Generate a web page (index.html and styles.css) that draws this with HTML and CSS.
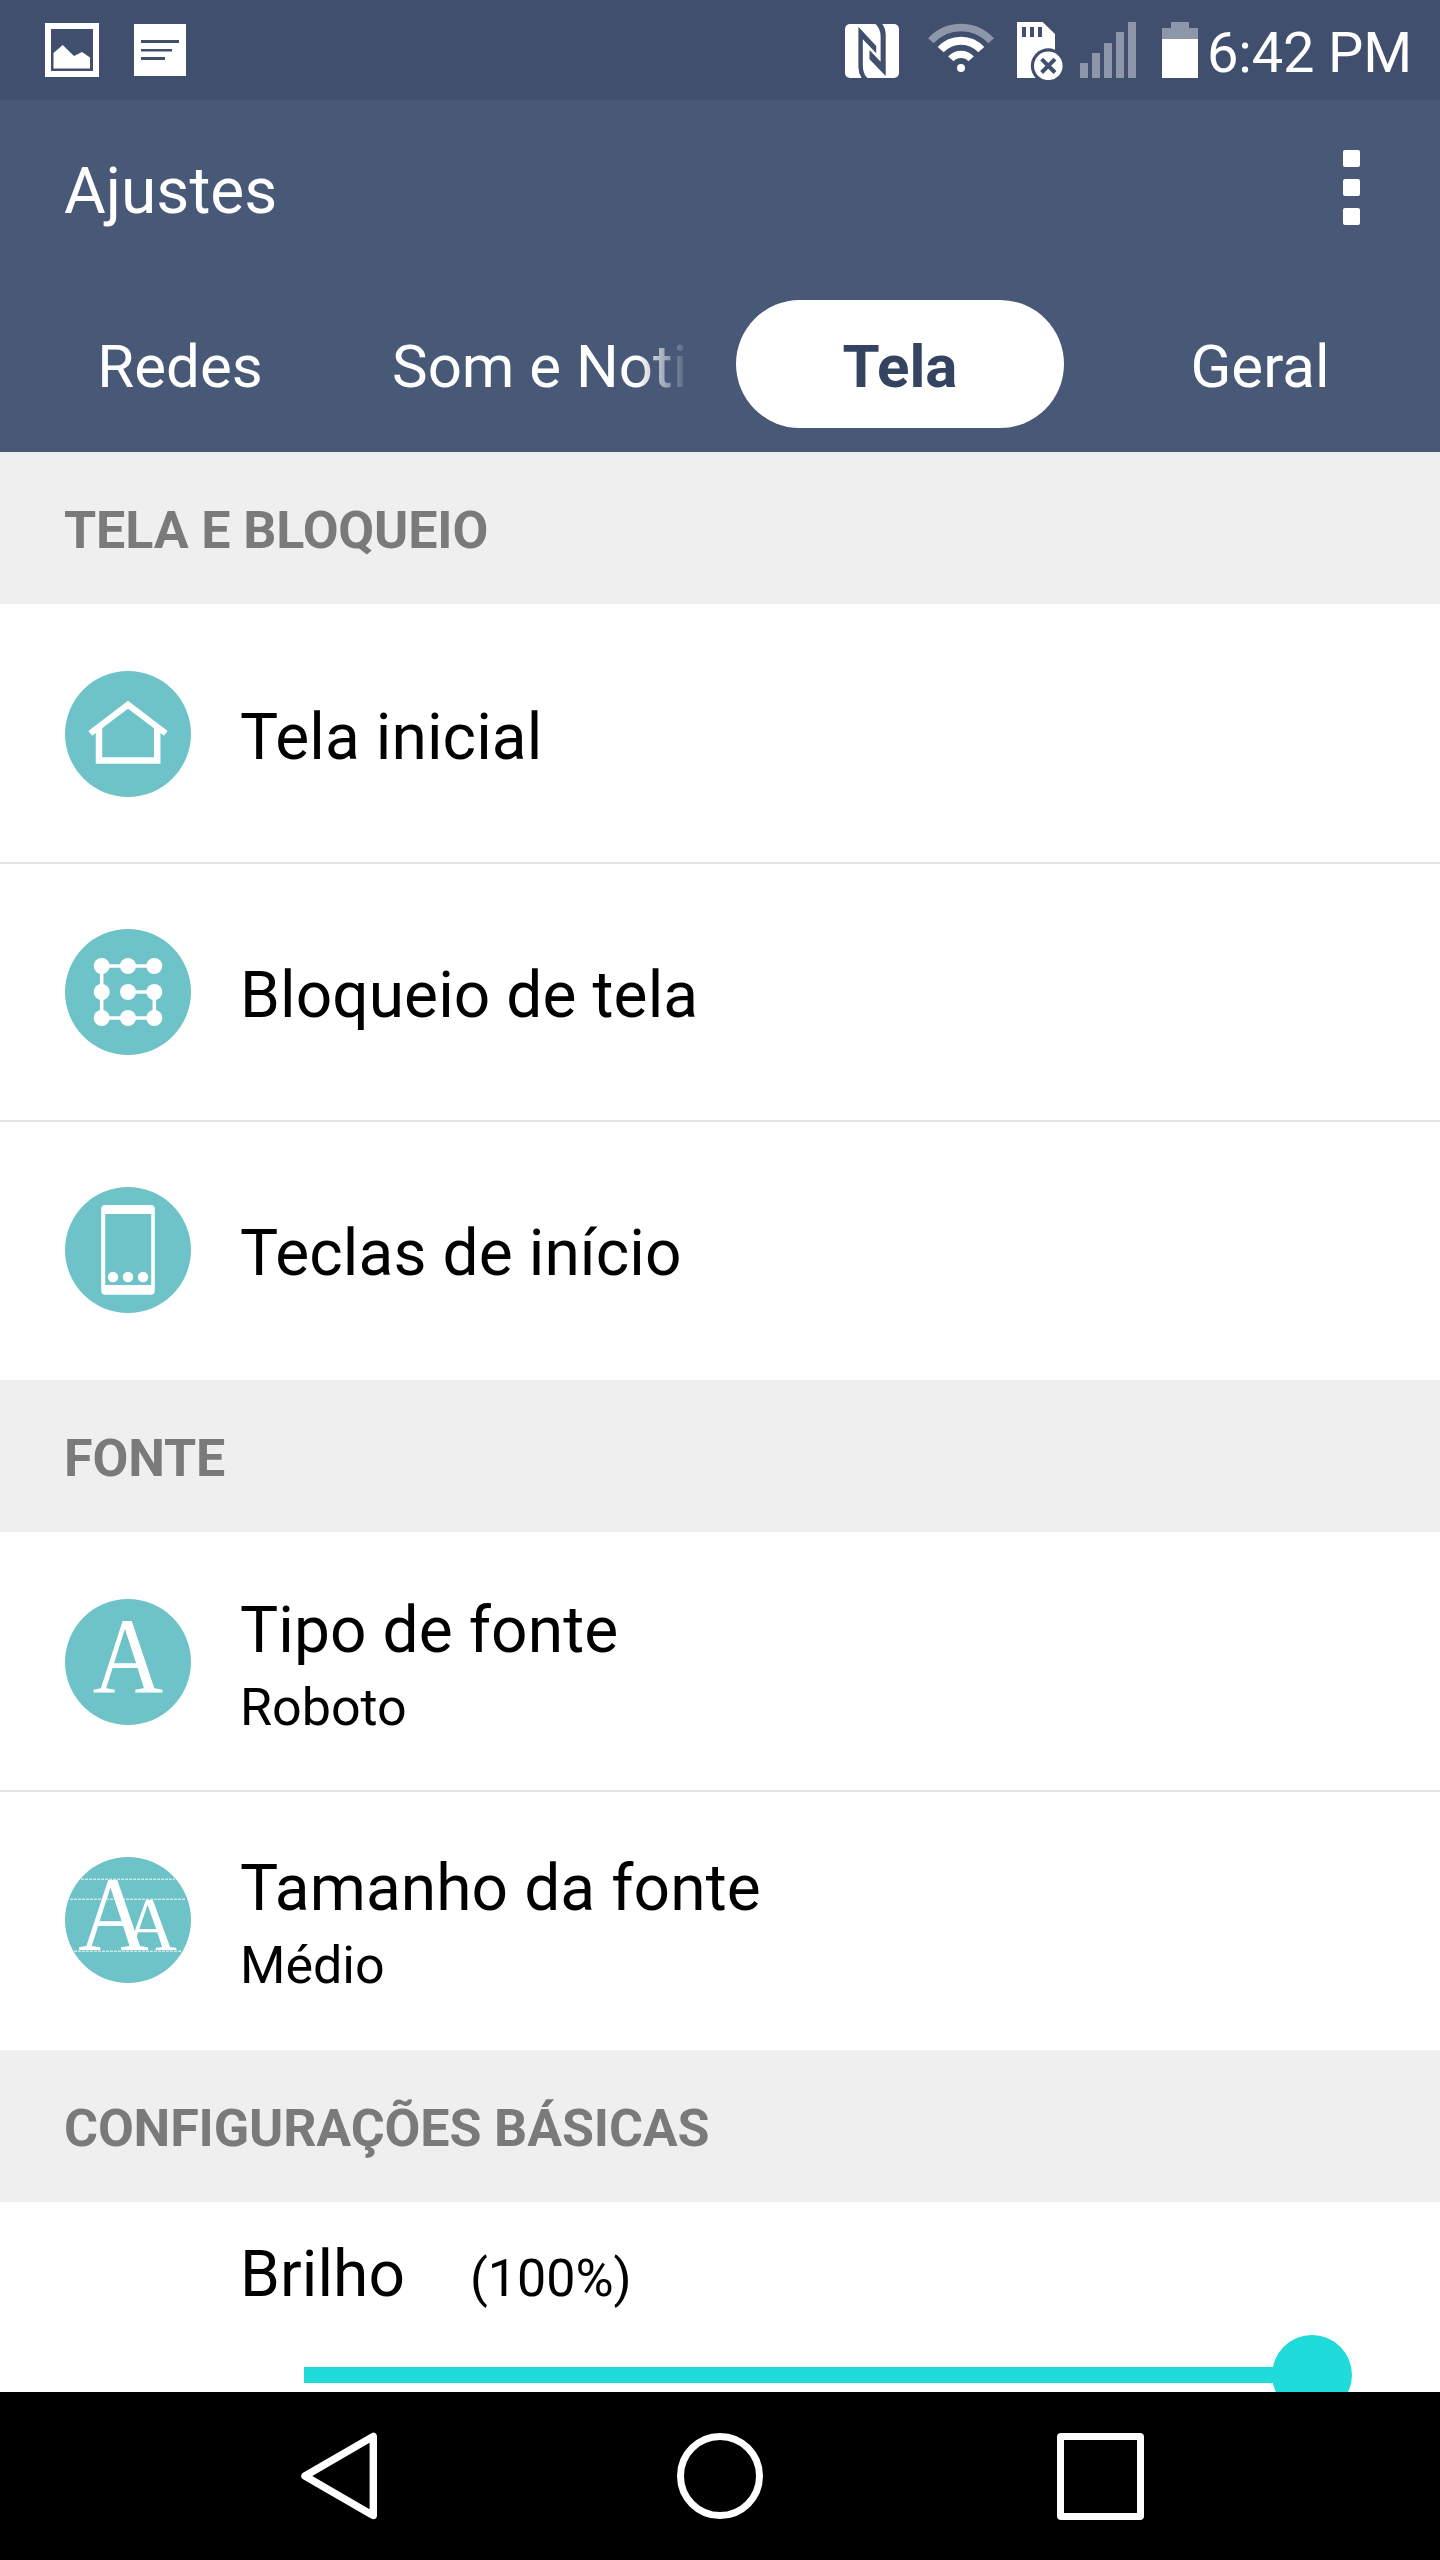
FILE: index.html
```html
<!DOCTYPE html>
<html lang="pt-BR">
<head>
  <meta charset="UTF-8">
  <meta name="viewport" content="width=device-width, initial-scale=1.0">
  <title>Ajustes</title>
  <link rel="stylesheet" href="styles.css">
</head>
<body>
  <div id="root">
    <!-- status bar -->
    <div class="status-bar">
      <div class="status-left">
        <svg width="54" height="54" viewBox="0 0 54 54">
          <path fill="#fff" fill-rule="evenodd" d="M0 0H54V54H0ZM6 6V48H48V6Z"/>
          <path fill="#fff" d="M8.5 30L17.7 22L29 33L37 29L45 34.5V45.5H8.5Z"/>
        </svg>
        <svg width="52" height="52" viewBox="0 0 52 52">
          <rect width="52" height="52" fill="#fff"/>
          <path fill="#404f6d" d="M7 16H45V19H7ZM7 25H38V27.5H7ZM7 33H31V36H7Z"/>
        </svg>
      </div>
      <div class="status-right">
        <!-- nfc -->
        <svg class="nfc" width="54" height="54" viewBox="0 0 54 54">
          <rect width="54" height="54" rx="5" fill="#fff"/>
          <path fill="#404f6d" d="M13.4 2.7L31.2 22V29.3L17.8 15.3V41Q17.8 50 22.5 54H16.6Q13.4 49 13.4 43Z"/>
          <path fill="#404f6d" d="M40.7 52L24.5 35.3V26L35.6 37.7V12.7Q35.6 4.3 30.4 0H37.2Q40.7 4.3 40.7 11Z"/>
        </svg>
        <!-- wifi -->
        <svg class="wifi" width="68" height="56" viewBox="0 0 68 56">
          <g fill="none">
            <path stroke="#8e96aa" stroke-width="7.5" d="M3.8 18.8A40.7 40.7 0 0 1 64.2 18.8"/>
            <path stroke="#fff" stroke-width="8" d="M13.7 27.7A27.3 27.3 0 0 1 54.3 27.7"/>
            <path stroke="#fff" stroke-width="7.3" d="M23.9 36.9A13.6 13.6 0 0 1 44.1 36.9"/>
          </g>
          <circle cx="34" cy="46" r="4" fill="#fff"/>
        </svg>
        <!-- sd card -->
        <svg class="sd" width="46" height="58" viewBox="0 0 46 58">
          <path fill="#fff" d="M0 0H25.6L38 12V56H0Z"/>
          <path fill="#404f6d" d="M5 5H9V15H5ZM13 5H17V15H13ZM21 5H25V15H21Z"/>
          <circle cx="31.3" cy="43.8" r="17.5" fill="#404f6d"/>
          <circle cx="31.3" cy="43.8" r="14.3" fill="#fff"/>
          <path stroke="#404f6d" stroke-width="4" d="M24.6 37.1L38 50.5M38 37.1L24.6 50.5"/>
        </svg>
        <!-- signal -->
        <svg class="signal" width="56" height="56" viewBox="0 0 56 56">
          <path fill="#8e96aa" d="M0 41H8V56H0ZM12 31H20V56H12ZM24 21H32V56H24ZM36 10H44V56H36ZM48 0H56V56H48Z"/>
        </svg>
        <!-- battery -->
        <svg class="battery" width="36" height="56" viewBox="0 0 36 56">
          <path fill="#8e96aa" d="M9 0H27V6H36V17H0V6H9Z"/>
          <rect y="17" width="36" height="39" fill="#fff"/>
        </svg>
        <span class="clock">6:42 PM</span>
      </div>
    </div>

    <!-- header -->
    <div class="title-bar">
      <div class="title">Ajustes</div>
      <div class="menu"><i></i><i></i><i></i></div>
    </div>
    <div class="tabs">
      <div class="tab"><span>Redes</span></div>
      <div class="tab"><span class="fade">Som e Noti</span></div>
      <div class="tab active"><span>Tela</span></div>
      <div class="tab"><span>Geral</span></div>
    </div>

    <!-- contents -->
    <div class="contents">
      <div class="section">TELA E BLOQUEIO</div>
      <ul class="list">
        <li>
          <svg class="icon" viewBox="0 0 126 126">
            <circle cx="63" cy="63" r="63" fill="#6dc3c8"/>
            <g fill="none" stroke="#fff">
              <path stroke-width="6.2" d="M25.2 62.4L63 33.7L100.8 62.4"/>
              <path stroke-width="6.5" d="M34 56V89.4H92.2V56"/>
            </g>
          </svg>
          <div class="text"><div class="name">Tela inicial</div></div>
        </li>
        <li>
          <svg class="icon" viewBox="0 0 126 126">
            <circle cx="63" cy="63" r="63" fill="#6dc3c8"/>
            <path fill="none" stroke="#fff" stroke-width="3.6" d="M89.3 37H36.7V89H89.3V63H63"/>
            <g fill="#fff">
              <circle cx="36.7" cy="37" r="8"/><circle cx="63" cy="37" r="8"/><circle cx="89.3" cy="37" r="8"/>
              <circle cx="36.7" cy="63" r="8"/><circle cx="63" cy="63" r="8"/><circle cx="89.3" cy="63" r="8"/>
              <circle cx="36.7" cy="89" r="8"/><circle cx="63" cy="89" r="8"/><circle cx="89.3" cy="89" r="8"/>
            </g>
          </svg>
          <div class="text"><div class="name">Bloqueio de tela</div></div>
        </li>
        <li>
          <svg class="icon" viewBox="0 0 126 126">
            <circle cx="63" cy="63" r="63" fill="#6dc3c8"/>
            <rect x="36.2" y="18" width="53.6" height="89.7" rx="4" fill="#fff"/>
            <rect x="40.2" y="27" width="46" height="71" fill="#6dc3c8"/>
            <g fill="#fff">
              <circle cx="48" cy="90" r="5.2"/><circle cx="63" cy="90" r="5.2"/><circle cx="78" cy="90" r="5.2"/>
            </g>
          </svg>
          <div class="text"><div class="name">Teclas de início</div></div>
        </li>
      </ul>

      <div class="section">FONTE</div>
      <ul class="list">
        <li>
          <svg class="icon" viewBox="0 0 126 126">
            <circle cx="63" cy="63" r="63" fill="#6dc3c8"/>
            <text class="glyph" transform="translate(63 93.7) scale(.91 1)" font-size="107">A</text>
          </svg>
          <div class="text">
            <div class="name">Tipo de fonte</div>
            <div class="value">Roboto</div>
          </div>
        </li>
        <li>
          <svg class="icon" viewBox="0 0 126 126">
            <circle cx="63" cy="63" r="63" fill="#6dc3c8"/>
            <path fill="none" stroke="#c9e8ea" stroke-width="1.6" stroke-dasharray="3 1" d="M16 22.3H110M5 42.3H121M9 94.3H117"/>
            <text class="glyph" transform="translate(48.5 93) scale(.93 1)" font-size="105">A</text>
            <text class="glyph" transform="translate(85 93) scale(.98 1)" font-size="76">A</text>
          </svg>
          <div class="text">
            <div class="name">Tamanho da fonte</div>
            <div class="value">Médio</div>
          </div>
        </li>
      </ul>

      <div class="section">CONFIGURAÇÕES BÁSICAS</div>
      <div class="brightness">
        <div class="brightness-label">
          <span class="name">Brilho</span>
          <span class="value">(100%)</span>
        </div>
        <div class="slider">
          <div class="track"></div>
          <div class="thumb"></div>
        </div>
      </div>
    </div>

    <!-- navigation -->
    <div class="nav">
      <svg width="82" height="88" viewBox="0 0 82 88">
        <path fill="none" stroke="#fff" stroke-width="7.4" stroke-linejoin="round" d="M3.9 44L72.3 4.4V83.6Z"/>
      </svg>
      <div class="nav-home"></div>
      <div class="nav-recent"></div>
    </div>
  </div>
</body>
</html>
```

FILE: styles.css
```css
*{
  box-sizing: border-box;
}
body{
  margin: 0;
  font-family: Roboto, "Liberation Sans", sans-serif;
  color: #000;
  background-color: #fff;
}
#root{
  width: 1440px;
  height: 2560px;
  display: flex;
  flex-direction: column;
  overflow: hidden;
}

/* status bar */
.status-bar{
  height: 100px;
  flex-shrink: 0;
  display: flex;
  justify-content: space-between;
  background-color: #404f6d;
}
.status-left{
  display: flex;
  align-items: center;
  gap: 35px;
  padding-left: 45px;
}
.status-right{
  display: flex;
  align-items: flex-start;
  padding-top: 22px;
  padding-right: 28px;
}
.nfc{
  margin-top: 2px;
  margin-right: 28px;
}
.wifi{
  margin-right: 22px;
}
.sd{
  margin-right: 17px;
}
.signal{
  margin-right: 26px;
}
.battery{
  margin-right: 9px;
}
.clock{
  width: 205px;
  line-height: 62px;
  font-size: 56px;
  letter-spacing: -0.15px;
  color: #fff;
  white-space: nowrap;
}

/* header */
.title-bar{
  height: 182px;
  flex-shrink: 0;
  display: flex;
  align-items: center;
  justify-content: space-between;
  padding: 0 80px 0 64px;
  background-color: #485877;
  color: #fff;
}
.title{
  font-size: 64px;
}
.menu{
  display: flex;
  flex-direction: column;
  gap: 12px;
  padding-bottom: 7px;
}
.menu i{
  width: 17px;
  height: 17px;
  border-radius: 2px;
  background-color: #fff;
}
.tabs{
  height: 170px;
  flex-shrink: 0;
  display: flex;
  padding: 18px 0 24px;
  background-color: #485877;
}
.tab{
  width: 328px;
  margin: 0 16px;
  padding: 5px 16px 0;
  display: flex;
  align-items: center;
  justify-content: center;
  font-size: 60px;
  color: #fff;
}
.tab span{
  white-space: nowrap;
}
.tab .fade{
  width: 296px;
  -webkit-mask-image: linear-gradient(to right, #000 246px, transparent 298px);
  mask-image: linear-gradient(to right, #000 246px, transparent 298px);
}
.active{
  border-radius: 64px;
  background-color: #fff;
  color: #344360;
  font-weight: 700;
}

/* contents */
.contents{
  height: 1940px;
  flex-shrink: 0;
  overflow: hidden;
}
.section{
  height: 152px;
  padding: 5px 64px 0;
  line-height: 148px;
  font-size: 52px;
  font-weight: 700;
  letter-spacing: -0.13px;
  color: #7a7a7a;
  background-color: #efefef;
}
.list{
  margin: 0;
  padding: 2px 0;
  list-style-type: none;
}
.list li{
  height: 256px;
  display: flex;
  align-items: center;
  gap: 49px;
  padding-left: 65px;
}
.list li + li{
  height: 258px;
  border-top: 2px solid #e4e4e4;
}
.icon{
  width: 126px;
  height: 126px;
}
.glyph{
  font-family: "Liberation Serif", serif;
  text-anchor: middle;
  fill: #fff;
}
.text{
  padding-top: 7px;
}
.value{
  font-size: 52px;
  line-height: 78px;
}
.name{
  font-size: 64px;
  line-height: 76px;
  letter-spacing: 0.1px;
}
.list .value{
  margin-bottom: -8px;
}

/* brightness */
.brightness-label{
  display: flex;
  align-items: baseline;
  gap: 65px;
  padding: 35px 0 0 240px;
}
.slider{
  position: relative;
  width: 1048px;
  height: 80px;
  margin-left: 304px;
  margin-top: 17px;
  padding-top: 32px;
}
.track{
  width: 1008px;
  height: 16px;
  background-color: #1fdcdb;
}
.thumb{
  position: absolute;
  right: 0;
  top: 0;
  width: 80px;
  height: 80px;
  border-radius: 50%;
  background-color: #1fdcdb;
}

/* navigation */
.nav{
  height: 168px;
  flex-shrink: 0;
  display: flex;
  align-items: center;
  gap: 294px;
  padding-left: 301px;
  background-color: #000;
}
.nav-home{
  width: 86px;
  height: 86px;
  border: 7px solid #fff;
  border-radius: 50%;
}
.nav-recent{
  width: 87px;
  height: 87px;
  border: 7px solid #fff;
  border-radius: 4px;
}
```
